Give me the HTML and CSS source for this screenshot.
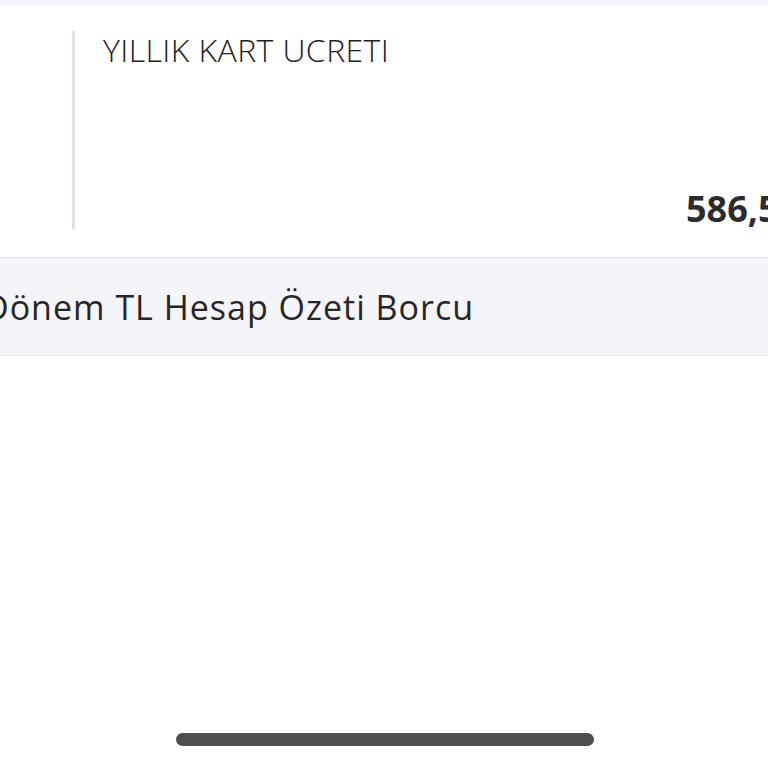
FILE: index.html
```html
<!DOCTYPE html>
<html lang="tr">
<head>
<meta charset="utf-8">
<title>Hesap Özeti</title>
<link rel="stylesheet" href="styles.css">
</head>
<body>
<div class="screen">
  <div class="top-strip"></div>
  <div class="fee-row">
    <div class="fee-side"></div>
    <div class="fee-body">
      <div class="fee-title">YILLIK KART UCRETI</div>
      <div class="fee-amount">586,50 TL</div>
    </div>
  </div>
  <div class="total-band">
    <span class="total-label">Dönem TL Hesap Özeti Borcu</span>
  </div>
  <div class="spacer"></div>
  <div class="home-bar-wrap"><div class="home-bar"></div></div>
</div>
</body>
</html>
```
FILE: styles.css
```css
html, body {
  margin: 0;
  padding: 0;
  background: #ffffff;
  overflow: hidden;
}

.screen {
  width: 768px;
  height: 768px;
  display: flex;
  flex-direction: column;
  overflow: hidden;
  font-family: "Open Sans", "Noto Sans", sans-serif;
  color: #2a2a2c;
}

.top-strip {
  height: 5px;
  background: #f5f5f9;
  flex: none;
}

.fee-row {
  display: flex;
  padding: 26px 0 28px 72px;
  flex: none;
}

.fee-side {
  width: 3px;
  height: 198px;
  background: #e2e2ea;
  flex: none;
}

.fee-body {
  display: flex;
  flex-direction: column;
  padding-left: 28px;
  white-space: nowrap;
}

.fee-title {
  font-size: 32px;
  line-height: 32px;
  font-weight: 300;
  letter-spacing: 0.4px;
  margin-top: 3px;
  color: #222224;
}

.fee-amount {
  margin-top: auto;
  padding-left: 583px;
  padding-bottom: 2px;
  font-size: 36px;
  line-height: 36px;
  font-weight: 700;
  color: #2b2b2d;
}

.total-band {
  height: 97px;
  flex: none;
  display: flex;
  align-items: center;
  background: #f5f5f9;
  border-top: 1px solid #e3e3ea;
  border-bottom: 1px solid #e6e6ec;
  white-space: nowrap;
}

.total-label {
  margin-left: -16px;
  font-size: 34px;
  font-weight: 400;
  letter-spacing: 1px;
  color: #262628;
}

.spacer {
  flex: 1;
}

.home-bar-wrap {
  display: flex;
  justify-content: center;
  padding: 0 0 22px 2px;
  flex: none;
}

.home-bar {
  width: 418px;
  height: 13px;
  border-radius: 7px;
  background: #4e4e4e;
}
```
